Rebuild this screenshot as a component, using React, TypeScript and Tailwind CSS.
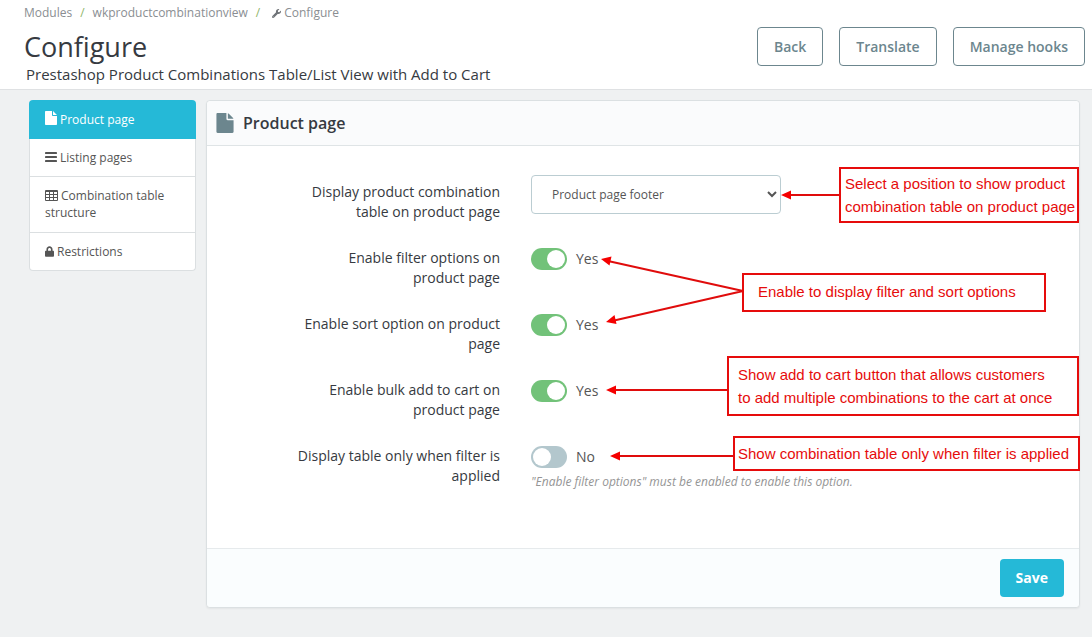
import { FaLock, FaWrench } from "react-icons/fa";
import type { ReactNode } from "react";

function FileIcon({ className }: { className: string }) {
  return (
    <svg viewBox="0 0 12 14" className={className} fill="currentColor" aria-hidden="true">
      <path d="M.8 0H7v4.2c0 .5.3.8.8.8H12v8.2c0 .5-.3.8-.8.8H.8c-.5 0-.8-.3-.8-.8V.8C0 .3.3 0 .8 0zM8 .1c.2.1.4.2.5.3l3 3c.2.2.3.4.4.6H8z" />
    </svg>
  );
}

function BarsIcon({ className }: { className: string }) {
  return (
    <svg viewBox="0 0 12 12" className={className} fill="currentColor" aria-hidden="true">
      <rect y="1" width="12" height="2" rx="0.4" />
      <rect y="5" width="12" height="2" rx="0.4" />
      <rect y="9" width="12" height="2" rx="0.4" />
    </svg>
  );
}

function TableIcon({ className }: { className: string }) {
  return (
    <svg viewBox="0 0 13 12" className={className} fill="currentColor" fillRule="evenodd" aria-hidden="true">
      <path d="M1 0h11a1 1 0 0 1 1 1v9a1 1 0 0 1-1 1H1a1 1 0 0 1-1-1V1a1 1 0 0 1 1-1zM1 2v2h3V2zM5 2v2h3V2zM9 2v2h3V2zM1 5v2h3V5zM5 5v2h3V5zM9 5v2h3V5zM1 8v2h3V8zM5 8v2h3V8zM9 8v2h3V8z" />
    </svg>
  );
}

function SettingRow({ id, label, tall, children }: { id: string; label: string; tall?: boolean; children: ReactNode }) {
  return (
    <div className="flex items-start gap-[31px]">
      <div className={tall ? "flex w-[293px] shrink-0 justify-end pt-[7px]" : "flex w-[293px] shrink-0 justify-end"}>
        <label htmlFor={id} className="max-w-[206px] text-right text-sm text-[#363a41]">
          {label}
        </label>
      </div>
      <div className="min-w-0">{children}</div>
    </div>
  );
}

function Toggle({ id, on }: { id: string; on?: boolean }) {
  return (
    <div className="flex items-center gap-[9px]">
      <input
        id={id}
        type="checkbox"
        role="switch"
        defaultChecked={on}
        className="h-[22px] w-9 shrink-0 appearance-none rounded-full bg-[#b3c7cd] p-0.5 before:block before:size-[18px] before:rounded-full before:bg-white checked:bg-[#72c279] checked:before:translate-x-3.5"
      />
      <span className="text-sm leading-[22px] text-[#555]">{on ? "Yes" : "No"}</span>
    </div>
  );
}

function Note({ className, children }: { className: string; children: ReactNode }) {
  return (
    <p className={`absolute whitespace-nowrap border-2 border-[#e60c0c] font-["Liberation_Sans",sans-serif] text-[15px] leading-[23px] text-[#e60c0c] ${className}`}>
      {children}
    </p>
  );
}

const headerButton =
  "h-[39px] rounded border border-[#6c868e] bg-white px-4 text-sm font-semibold text-[#6c868e]";

export default function App() {
  return (
    <div className='min-h-screen bg-[#eff1f2] font-["Open_Sans",sans-serif] text-[#363a41]'>
      <header className="flex items-start justify-between border-b border-[#dfe1e3] bg-white pr-[7px] pl-6">
        <div className="pt-1 pb-[5px]">
          <nav aria-label="Breadcrumb" className="flex items-center text-xs leading-[18px] text-[#8a8e92]">
            <a href="#modules">Modules</a>
            <span className="px-2 text-[#8fb56a]">/</span>
            <a href="#module">wkproductcombinationview</a>
            <span className="px-2 text-[#8fb56a]">/</span>
            <a href="#configure" className="flex items-center gap-[3px] pl-1">
              <FaWrench className="size-[9px] text-[#6f7377]" />
              Configure
            </a>
          </nav>
          <h1 className="pt-[7px] text-[27px] leading-9">Configure</h1>
          <p className="pl-0.5 text-[15px] leading-[19px]">
            Prestashop Product Combinations Table/List View with Add to Cart
          </p>
        </div>
        <div className="flex gap-4 pt-[27px]">
          <button type="button" className={headerButton}>Back</button>
          <button type="button" className={headerButton}>Translate</button>
          <button type="button" className={headerButton}>Manage hooks</button>
        </div>
      </header>

      <div className="flex items-start gap-[10px] pt-[10px] pr-3 pb-[29px] pl-[29px]">
        <nav aria-label="Sections" className="w-[167px] shrink-0 text-xs leading-[17px] text-[#555]">
          <a href="#product" className="block rounded-t bg-[#25b9d7] px-4 py-[11px] text-white">
            <FileIcon className="mr-[3px] inline h-[14px] w-3 align-[-1px]" />
            Product page
          </a>
          <a href="#listing" className="block border-x border-b border-[#dbdfe1] bg-white px-[15px] py-[10px]">
            <BarsIcon className="mr-[3px] inline size-3 align-[-1px]" />
            Listing pages
          </a>
          <a href="#structure" className="block border-x border-b border-[#dbdfe1] bg-white px-[15px] pt-[10px] pb-[11px]">
            <TableIcon className="mr-[3px] inline h-3 w-[13px] align-[-2px]" />
            Combination table structure
          </a>
          <a href="#restrictions" className="block rounded-b border-x border-b border-[#dbdfe1] bg-white px-[15px] py-[10px]">
            <FaLock className="mr-[3px] inline h-[11px] w-[9px] align-[-1px]" />
            Restrictions
          </a>
        </nav>

        <main className="relative min-w-0 flex-1 rounded border border-[#dbe0e2] bg-white shadow-xs">
          <form>
            <div className="flex h-[45px] items-center gap-[9px] rounded-t border-b border-[#dfe4e6] bg-[#fafbfc] px-[9px]">
              <FileIcon className="h-5 w-[18px] text-[#6c868e]" />
              <h2 className="text-base font-semibold">Product page</h2>
            </div>

            <div className="flex flex-col gap-[26px] pt-[29px] pb-14">
              <SettingRow id="position" label="Display product combination table on product page" tall>
                <select id="position" className="h-[39px] w-[250px] rounded border border-[#bbcdd2] bg-white pl-4 text-xs text-[#555]">
                  <option>Product page footer</option>
                </select>
              </SettingRow>
              <SettingRow id="filter" label="Enable filter options on product page">
                <Toggle id="filter" on />
              </SettingRow>
              <SettingRow id="sort" label="Enable sort option on product page">
                <Toggle id="sort" on />
              </SettingRow>
              <SettingRow id="bulk" label="Enable bulk add to cart on product page">
                <Toggle id="bulk" on />
              </SettingRow>
              <SettingRow id="only" label="Display table only when filter is applied">
                <Toggle id="only" />
                <p className="pt-1 text-xs leading-5 text-[#959595] italic">
                  "Enable filter options" must be enabled to enable this option.
                </p>
              </SettingRow>
            </div>

            <div className="flex justify-end rounded-b border-t border-[#e6eaec] bg-[#fafdfe] px-[15px] py-[10px]">
              <button type="button" className="h-[38px] rounded bg-[#25b9d7] px-4 text-sm font-bold text-white">
                Save
              </button>
            </div>
          </form>

          <svg className="pointer-events-none absolute top-0 left-0 h-[506px] w-[873px]" viewBox="207 101 873 506" fill="none" stroke="#e00c0c" strokeWidth="2" aria-hidden="true">
            <path d="M788 195H840M608 261L743 291L612 321M614 390H728M618 456H734" />
            <path stroke="none" fill="#f50000" d="M781 195l10-4.500v9zM601 259l10.500-2.500-2 9zM606 322l8.500-7 2 9zM606 390l10-4.500v9zM610 456l10-4.500v9z" />
          </svg>
          <Note className="top-[66px] left-[632px] h-14 w-60 pt-[3px] pl-1">
            Select a position to show product<br />combination table on product page
          </Note>
          <Note className="top-[172px] left-[535px] h-[39px] w-[304px] pt-[5px] pl-[14px]">
            Enable to display filter and sort options
          </Note>
          <Note className="top-[255px] left-[520px] h-[60px] w-[352px] pt-[5px] pl-[9px]">
            Show add to cart button that allows customers<br />to add multiple combinations to the cart at once
          </Note>
          <Note className="top-[335px] left-[526px] h-[35px] w-[347px] pt-1 pl-[3px]">
            Show combination table only when filter is applied
          </Note>
        </main>
      </div>
    </div>
  );
}
